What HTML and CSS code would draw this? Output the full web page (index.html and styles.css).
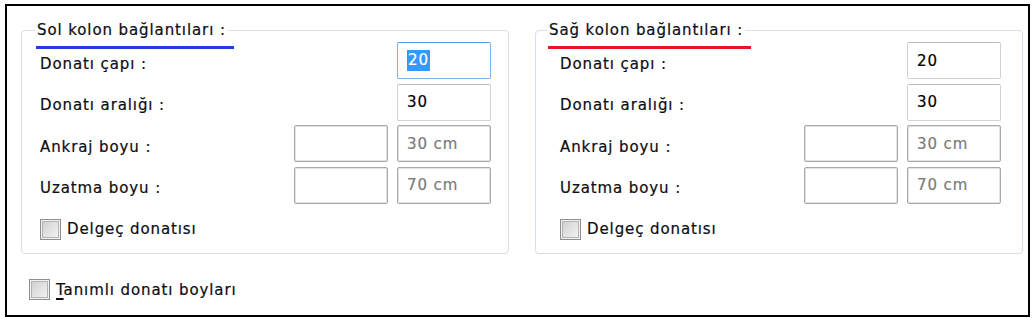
FILE: index.html
```html
<!DOCTYPE html>
<html lang="tr">
<head>
<meta charset="utf-8">
<link rel="stylesheet" href="styles.css">
</head>
<body>
<div class="frame">
  <div class="groups">
    <fieldset class="group">
      <legend class="legend legend--blue">Sol kolon bağlantıları :</legend>
      <div class="rows">
        <span class="label">Donatı çapı :</span>
        <span class="field field--focus col3"><span class="sel">20</span></span>
        <span class="label">Donatı aralığı :</span>
        <span class="field col3">30</span>
        <span class="label">Ankraj boyu :</span>
        <span class="field field--off"></span>
        <span class="field field--off dim">30 cm</span>
        <span class="label">Uzatma boyu :</span>
        <span class="field field--off"></span>
        <span class="field field--off dim">70 cm</span>
      </div>
      <label class="check check--inner"><span class="box"></span>Delgeç donatısı</label>
    </fieldset>
    <fieldset class="group group--right">
      <legend class="legend legend--red">Sağ kolon bağlantıları :</legend>
      <div class="rows">
        <span class="label">Donatı çapı :</span>
        <span class="field col3">20</span>
        <span class="label">Donatı aralığı :</span>
        <span class="field col3">30</span>
        <span class="label">Ankraj boyu :</span>
        <span class="field field--off"></span>
        <span class="field field--off dim">30 cm</span>
        <span class="label">Uzatma boyu :</span>
        <span class="field field--off"></span>
        <span class="field field--off dim">70 cm</span>
      </div>
      <label class="check check--inner"><span class="box"></span>Delgeç donatısı</label>
    </fieldset>
  </div>
  <label class="check check--bottom"><span class="box"></span><span><u>T</u>anımlı donatı boyları</span></label>
</div>
</body>
</html>
```
FILE: styles.css
```css
* { box-sizing: border-box; }
html, body { margin: 0; padding: 0; background: #fff; }
body {
  font-family: "DejaVu Sans", Verdana, sans-serif;
  font-size: 15px;
  letter-spacing: 0.9px;
  color: #0c0c14;
  -webkit-text-stroke: 0.2px currentColor;
}
.frame {
  margin: 4px 3px 0 5px;
  width: 1025px;
  height: 313px;
  border: 2px solid #000;
  padding: 12px 0 0 14px;
}
.groups {
  display: flex;
  gap: 26px;
}
.group {
  margin: 0;
  width: 488px;
  height: 236px;
  border: 1px solid #d6dee6;
  border-radius: 4px;
  padding: 0 17px 0 18px;
  display: flex;
  flex-direction: column;
}
.group--right { padding: 0 21px 0 24px; }
.legend {
  margin-left: -5px;
  padding: 3px 2px 3px 2px;
  line-height: 18px;
  position: relative;
}
.legend::after {
  content: "";
  position: absolute;
  left: 1px;
  right: -6px;
  bottom: -7px;
  height: 3px;
}
.legend--blue::after { background: #1f3fe0; }
.legend--red { margin-left: -13px; }
.legend--red::after { background: #e8141e; }
.rows {
  margin-top: 0;
  display: grid;
  grid-template-columns: 1fr 94px 94px;
  grid-auto-rows: 37px;
  column-gap: 9px;
  row-gap: 4.5px;
  align-items: center;
}
.label { grid-column: 1; padding-top: 6px; }
.col3 { grid-column: 3; }
.field {
  height: 37px;
  border: 1px solid #cfd3d8;
  border-top-color: #b9bdc3;
  border-radius: 2px;
  padding: 0 9px;
  display: flex;
  align-items: center;
  color: #000;
  background: #fff;
}
.field--focus {
  border-color: #7fb2e6;
  border-top-color: #5d9ad6;
}
.sel {
  background: #3399ff;
  color: #fff;
  line-height: 21px;
  padding: 0 1px;
}
.field--off {
  border: 1px solid #a9a9a9;
  box-shadow: inset 0 0 0 1px #e2e2e2;
}
.dim { color: #7a7a7a; }
.check {
  display: flex;
  align-items: center;
  gap: 6px;
}
.check--inner { margin-top: 15px; }
.check--bottom { margin: 25px 0 0 8px; }
.box {
  width: 21px;
  height: 21px;
  border: 1px solid #8e8e8e;
  box-shadow: inset 0 0 0 1px #f2f2f2, inset 0 0 0 2px #b3b3b3;
  background: linear-gradient(135deg, #cdcdcd, #f6f6f6);
}
u { text-decoration-thickness: 2px; text-underline-offset: 3px; }
```
